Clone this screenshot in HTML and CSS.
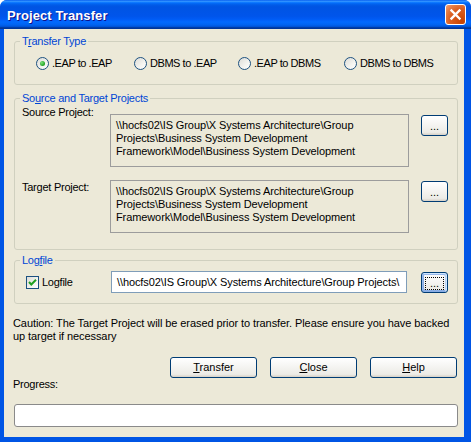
FILE: index.html
```html
<!DOCTYPE html>
<html lang="en">
<head>
    <meta charset="UTF-8">
    <title>Project Transfer</title>
    <link rel="stylesheet" href="styles.css">
</head>
<body>
    <div class="window">
        <div class="titlebar">
            <span class="title">Project Transfer</span>
            <button class="close-btn" title="Close">
                <svg width="19" height="19" viewBox="0 0 19 19">
                    <path d="M5.5 5.5 L13.5 13.5 M13.5 5.5 L5.5 13.5" stroke="#fff" stroke-width="2.4" stroke-linecap="square"/>
                </svg>
            </button>
        </div>

        <div class="client">
            <!-- transfer type -->
            <fieldset class="group">
                <legend>T<u>r</u>ansfer Type</legend>
                <div class="radio-row">
                    <label class="radio radio-1"><span class="radio-mark checked"></span>.EAP to .EAP</label>
                    <label class="radio radio-2"><span class="radio-mark"></span>DBMS to .EAP</label>
                    <label class="radio radio-3"><span class="radio-mark"></span>.EAP to DBMS</label>
                    <label class="radio"><span class="radio-mark"></span>DBMS to DBMS</label>
                </div>
            </fieldset>

            <!-- source / target -->
            <fieldset class="group group-projects">
                <legend>So<u>u</u>rce and Target Projects</legend>
                <div class="path-row path-source">
                    <span class="field-label">Source Project:</span>
                    <div class="path-box">\\hocfs02\IS Group\X Systems Architecture\Group<br>Projects\Business System Development<br>Framework\Model\Business System Development</div>
                    <button class="btn btn-browse">...</button>
                </div>
                <div class="path-row path-target">
                    <span class="field-label">Target Project:</span>
                    <div class="path-box">\\hocfs02\IS Group\X Systems Architecture\Group<br>Projects\Business System Development<br>Framework\Model\Business System Development</div>
                    <button class="btn btn-browse">...</button>
                </div>
            </fieldset>

            <!-- logfile -->
            <fieldset class="group group-log">
                <legend>Log<u>f</u>ile</legend>
                <div class="log-row">
                    <label class="check"><span class="check-mark">
                        <svg width="11" height="11" viewBox="0 0 11 11">
                            <path d="M2 5 L4.3 7.5 L9 2.8" fill="none" stroke="#21a121" stroke-width="2"/>
                        </svg>
                    </span>Logfile</label>
                    <div class="log-input">\\hocfs02\IS Group\X Systems Architecture\Group Projects\</div>
                    <button class="btn btn-browse focused"><span>...</span></button>
                </div>
            </fieldset>

            <p class="caution">Caution: The Target Project will be erased prior to transfer. Please ensure you have backed up target if necessary</p>

            <div class="actions">
                <button class="btn btn-action"><u>T</u>ransfer</button>
                <button class="btn btn-action"><u>C</u>lose</button>
                <button class="btn btn-action"><u>H</u>elp</button>
            </div>

            <p class="progress-label">Progress:</p>
            <div class="progress"></div>
        </div>
    </div>
</body>
</html>
```

FILE: styles.css
```css
* {
    margin: 0;
    padding: 0;
    box-sizing: border-box;
}

body {
    font-family: "Liberation Sans", Arial, sans-serif;
    font-size: 11px;
    line-height: 13px;
    letter-spacing: -0.25px;
    color: #000;
    background: #fff;
}

.window {
    width: 471px;
    height: 442px;
    display: flex;
    flex-direction: column;
    background: #0055e5;
    border-radius: 7px 7px 0 0;
    overflow: hidden;
}

.titlebar {
    height: 29px;
    flex: none;
    display: flex;
    align-items: center;
    padding: 0 5px 0 7px;
    background: linear-gradient(180deg, #0058ee 0%, #3593ff 4%, #288eff 6%, #127dff 8%, #036ffc 10%, #0262ee 14%, #0057e5 20%, #0054e3 24%, #0055eb 56%, #005bf5 66%, #026afe 76%, #0062ef 86%, #0052d6 92%, #0040ab 94%, #003092 100%);
}

.title {
    flex: 1;
    color: #fff;
    font-weight: bold;
    font-size: 13px;
    letter-spacing: 0.1px;
    text-shadow: 1px 1px #0f1089;
    padding-top: 1px;
}

.close-btn {
    width: 21px;
    height: 21px;
    border: 1px solid #fff;
    border-radius: 3px;
    background: radial-gradient(circle at 85% 85%, #c84300 0%, #da5f22 55%, #e5793f 75%, #f0a07a 100%);
    display: flex;
    align-items: center;
    justify-content: center;
}

.client {
    flex: 1;
    margin: 0 7px 5px 4px;
    padding: 0 6px 0 10px;
    background: #ece9d8;
    display: flex;
    flex-direction: column;
}

/* group boxes */
.group {
    border: 1px solid #d0d0bf;
    border-radius: 3px;
    margin-top: 6px;
}

.group legend {
    margin-left: 5px;
    padding: 0 2px;
    color: #0046d5;
    line-height: 13px;
}

.group-projects {
    margin-top: 7px;
}

.group-log {
    margin-top: 4px;
}

.radio-row {
    display: flex;
    margin: 9px 0 14px;
    padding-left: 21px;
    letter-spacing: -0.45px;
}

.radio {
    display: flex;
    align-items: center;
    gap: 3px;
    height: 13px;
}

.radio-1 { width: 98px; }
.radio-2 { width: 104px; }
.radio-3 { width: 106px; }

.radio-mark {
    width: 13px;
    height: 13px;
    border: 1px solid #1c5180;
    border-radius: 50%;
    background: linear-gradient(135deg, #dcdcd7 0%, #f4f4f0 60%, #fff 100%);
    display: flex;
    align-items: center;
    justify-content: center;
}

.radio-mark.checked::after {
    content: "";
    width: 5px;
    height: 5px;
    border-radius: 50%;
    background: radial-gradient(circle at 35% 35%, #7be27b, #21a121 70%);
}

/* path rows */
.path-row {
    display: flex;
    align-items: flex-start;
    padding-left: 7px;
}

.path-source {
    margin-top: 1px;
}

.path-source .path-box { margin-top: 8px; }
.path-source .btn-browse { margin-top: 9px; }

.path-target {
    margin-top: 13px;
    margin-bottom: 16px;
}

.path-target .field-label { margin-top: 1px; }
.path-target .btn-browse { margin-top: 1px; }

.field-label {
    width: 88px;
    flex: none;
}

.path-box {
    width: 299px;
    height: 53px;
    flex: none;
    border: 1px solid #9c9c9c;
    padding: 4px 5px;
    background: #ece9d8;
    white-space: nowrap;
    letter-spacing: -0.1px;
}

/* buttons */
.btn {
    font: inherit;
    color: #000;
    border: 1px solid #003c74;
    border-radius: 3px;
    background: linear-gradient(180deg, #fff 0%, #ecebe6 86%, #d6d0c5 100%);
}

.btn-browse {
    width: 27px;
    height: 21px;
    flex: none;
    margin-left: 12px;
    padding-top: 2px;
}

.btn-browse.focused {
    margin-top: 1px;
    margin-left: 14px;
    box-shadow: inset -1px 1px #cee7ff, inset 1px 2px #98b8ea, inset -2px 2px #bcd4f6, inset 1px -1px #89ade4, inset 2px -2px #89ade4;
}

.btn-browse.focused span {
    display: inline-block;
    outline: 1px dotted #000;
    width: 17px;
    line-height: 11px;
}

/* logfile row */
.log-row {
    display: flex;
    align-items: flex-start;
    padding-left: 11px;
    margin: 4px 0 10px;
}

.check {
    width: 85px;
    flex: none;
    display: flex;
    align-items: center;
    gap: 3px;
    margin-top: 5px;
}

.check-mark {
    width: 13px;
    height: 13px;
    border: 1px solid #1c5180;
    background: linear-gradient(135deg, #dcdcd7 0%, #f4f4f0 60%, #fff 100%);
    display: flex;
}

.log-input {
    width: 296px;
    height: 22px;
    flex: none;
    border: 1px solid #7f9db9;
    background: #fff;
    padding: 4px 4px 0 5px;
    white-space: nowrap;
    overflow: hidden;
    letter-spacing: -0.1px;
}

.caution {
    margin: 13px 0 0 -1px;
    letter-spacing: -0.08px;
}

.actions {
    display: flex;
    justify-content: flex-end;
    gap: 13px;
    margin-top: 14px;
    margin-right: 1px;
}

.btn-action {
    width: 87px;
    height: 21px;
}

.progress-label {
    margin-left: -1px;
}

.progress {
    height: 23px;
    margin-top: 13px;
    border: 1px solid #8a8a8a;
    border-radius: 3px;
    background: #fff;
}
```
